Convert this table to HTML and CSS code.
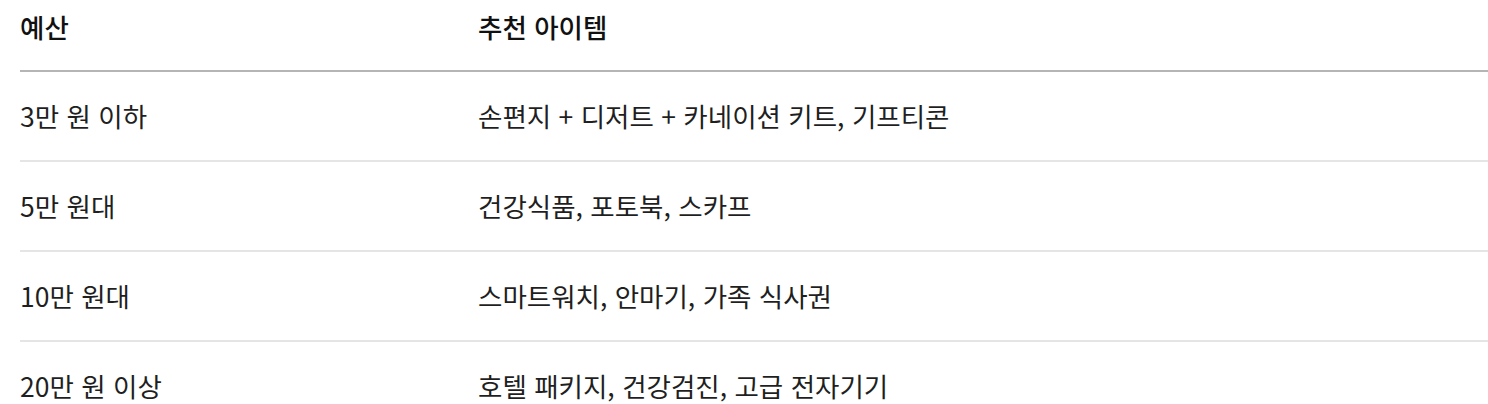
FILE: index.html
```html
<!DOCTYPE html>
<html lang="ko">
<head>
<meta charset="utf-8">
<link rel="stylesheet" href="styles.css">
</head>
<body>
<div class="table">
  <div class="row head">
    <div class="cell">예산</div>
    <div class="cell">추천 아이템</div>
  </div>
  <div class="row">
    <div class="cell">3만 원 이하</div>
    <div class="cell">손편지 + 디저트 + 카네이션 키트, 기프티콘</div>
  </div>
  <div class="row">
    <div class="cell">5만 원대</div>
    <div class="cell">건강식품, 포토북, 스카프</div>
  </div>
  <div class="row">
    <div class="cell">10만 원대</div>
    <div class="cell">스마트워치, 안마기, 가족 식사권</div>
  </div>
  <div class="row last">
    <div class="cell">20만 원 이상</div>
    <div class="cell">호텔 패키지, 건강검진, 고급 전자기기</div>
  </div>
</div>
</body>
</html>
```
FILE: styles.css
```css
html, body {
  margin: 0;
  padding: 0;
  background: #ffffff;
}
body {
  font-family: "Noto Sans CJK KR", "Noto Sans", sans-serif;
  font-size: 26.5px;
  color: #1f1f1f;
  overflow: hidden;
}
.table {
  margin-left: 20px;
  display: flex;
  flex-direction: column;
}
.row {
  display: grid;
  grid-template-columns: 458px 1fr;
  border-bottom: 2px solid #e5e5e5;
}
.row .cell {
  padding: 28px 0;
  line-height: 32px;
}
.row.head {
  border-bottom-color: #b5b5b5;
}
.row.head .cell {
  padding: 11px 0 27px;
  font-weight: 500;
  color: #111111;
}
.row.last {
  border-bottom: none;
}
```
